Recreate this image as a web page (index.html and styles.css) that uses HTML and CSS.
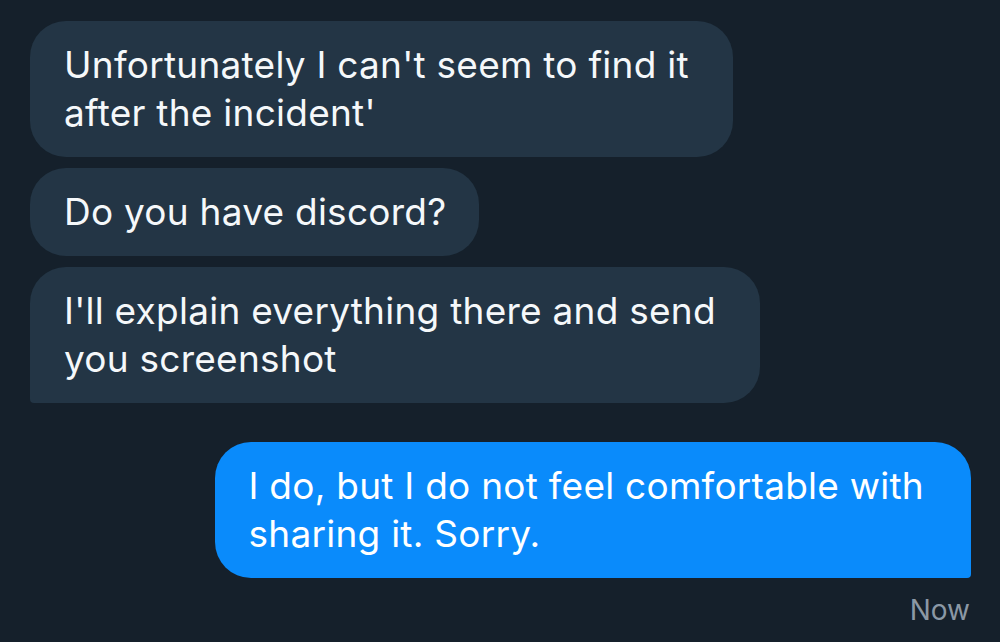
FILE: index.html
```html
<!DOCTYPE html>
<html lang="en">
<head>
<meta charset="utf-8">
<title>Messages</title>
<link rel="stylesheet" href="styles.css">
</head>
<body>
<main class="thread">
  <div class="group group-in">
    <div class="bubble in first">Unfortunately I can't seem to find it<br>after the incident'</div>
    <div class="bubble in single">Do you have discord?</div>
    <div class="bubble in last">I'll explain everything there and send<br>you screenshot</div>
  </div>
  <div class="group group-out">
    <div class="bubble out last">I do, but I do not feel comfortable with<br>sharing it. Sorry.</div>
    <div class="time">Now</div>
  </div>
</main>
</body>
</html>
```
FILE: styles.css
```css
html, body {
  margin: 0;
  padding: 0;
  background: #15202b;
  height: 100%;
  overflow: hidden;
}
body {
  font-family: Inter, "Noto Sans", sans-serif;
  color: #f5f8fa;
}
.thread {
  display: flex;
  flex-direction: column;
  padding: 21px 29px 0 30px;
  gap: 39px;
}
.group {
  display: flex;
  flex-direction: column;
  gap: 11px;
}
.group-in { align-items: flex-start; }
.group-out { align-items: flex-end; gap: 0; }
.bubble {
  font-size: 37px;
  line-height: 48px;
  letter-spacing: 0.25px;
  padding: 20px 44px 20px 34px;
  border-radius: 36px;
  white-space: nowrap;
}
.bubble.single { padding-right: 33px; }
.bubble.in { background: #233545; }
.bubble.in.last { border-bottom-left-radius: 4px; }
.bubble.out {
  background: #0a8bfb;
  color: #ffffff;
  padding-right: 47px;
}
.bubble.out.last { border-bottom-right-radius: 4px; }
.time {
  margin-top: 14px;
  font-size: 28px;
  line-height: 36px;
  color: #8b98a5;
  padding-right: 1px;
}
```
